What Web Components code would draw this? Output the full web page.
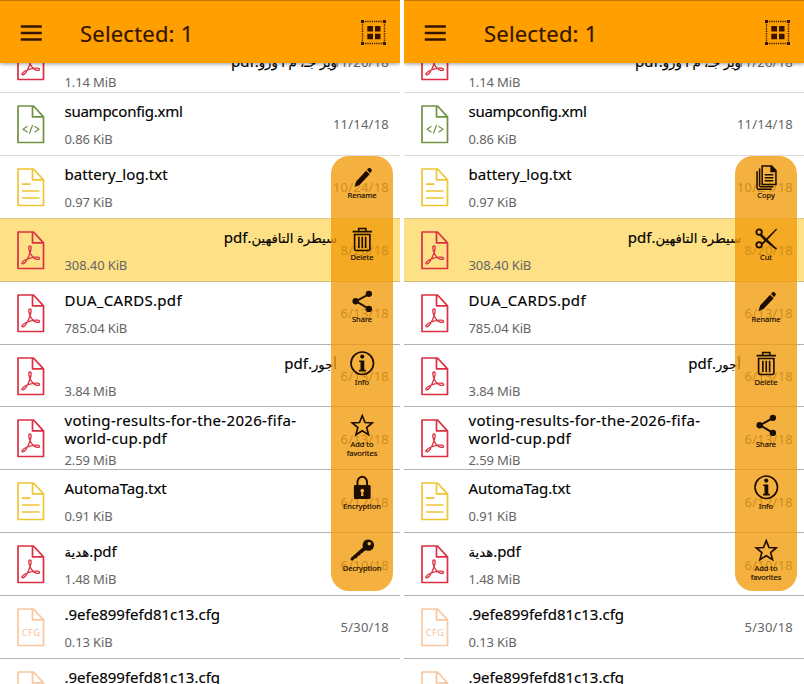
<!DOCTYPE html>
<html lang="en">
<head>
<meta charset="UTF-8">
<title>File manager</title>
<style>
    body {
        margin: 0;
        width: 804px;
        height: 684px;
        display: flex;
        gap: 4px;
        overflow: hidden;
        background: #fff;
        font-family: "Noto Sans", "DejaVu Sans", sans-serif;
    }
</style>
</head>
<body>
<phone-screen actions="rename,delete,share,info,favorite,encrypt,decrypt"></phone-screen>
<phone-screen actions="copy,cut,rename,delete,share,info,favorite"></phone-screen>

<script>
const PAGE = '<path d="M1 1H16.500L26.500 11.800V37.500H1ZM15.500 1V11.800H26.500"/>';

const FILE_ICONS = {
    pdf: { color: '#dc3042', art: '<path stroke-width="1.300" d="M13 15c-2.200 0-.9 4.600.2 7 1.500 3.200 3.900 5.700 6.700 6.300 3.400.7 3.500-1.800.8-2.100-4.100-.5-9 .9-12.200 2.600-3.500 1.900-4.500 4.200-2.600 4 2.300-.3 5.300-6 6.800-10 1.100-2.900 2.400-7.800.3-7.800Z"/>' },
    xml: { color: '#6f9340', art: '<path stroke-width="1.200" d="M10.500 21.300 6 24.200l4.500 3M17.500 21.300l4.500 2.900-4.500 3M15.600 20l-3.200 8.500"/>' },
    txt: { color: '#efc534', art: '<path stroke-width="1.700" d="M5 16.200H13.500M5 23H22.500M5 30H22.500"/>' },
    cfg: { color: '#f8c8a0', art: '<text x="13.800" y="28" font-size="9" text-anchor="middle" textLength="18" fill="#f6c099" stroke="none">CFG</text>' }
};

const ACTIONS = {
    rename: ['Rename', '<path d="M4.500 21.500 6 16.200 15.700 5.600 19.300 9 9.300 19.700ZM16.600 4.700l1.500-1.500q1-.8 2 .1l1 1q.8 1-.1 1.900l-1.400 1.800Z"/>'],
    delete: ['Delete', '<path d="M2.500 4.500H21.500M8.500 4.300V1.500H15.500V4.300M4.500 7.300V21.500Q4.500 23 6 23H18Q19.500 23 19.500 21.500V7.300ZM8.700 9.500V20.500M12 9.500V20.500M15.300 9.500V20.500" fill="none" stroke="#1d0d00" stroke-width="1.600"/>'],
    share: ['Share', '<path d="M18.500 5 6 12 18.500 19.500" fill="none" stroke="#1d0d00" stroke-width="1.900"/><circle cx="18.500" cy="4.700" r="3.100"/><circle cx="5.500" cy="12" r="3.100"/><circle cx="18.500" cy="19.500" r="3.100"/>'],
    info: ['Info', '<circle cx="12" cy="12" r="11" fill="none" stroke="#1d0d00" stroke-width="1.600"/><circle cx="12" cy="5.500" r="2"/><path d="M9 9.200H14V18.300H15.500V20H8.800V18.300H10.300V10.700H9Z"/>'],
    favorite: ['Add to favorites', '<path d="M12 2.600 14.700 9.300 21.800 9.700 16.300 14.200 18.200 21.200 12 17.400 5.800 21.200 7.700 14.200 2.200 9.700 9.300 9.300Z" fill="none" stroke="#1d0d00" stroke-width="1.600"/>'],
    encrypt: ['Encryption', '<path d="M7.300 11V7a4.700 5.300 0 0 1 9.400 0V11" fill="none" stroke="#1d0d00" stroke-width="1.900"/><path fill-rule="evenodd" d="M5.200 9.800H18.800Q20.200 9.800 20.200 11.200V22Q20.200 23.500 18.800 23.500H5.200Q3.800 23.500 3.800 22V11.200Q3.800 9.800 5.200 9.800ZM12 13.500a2 2 0 0 0-.9 3.700L10.700 20.500H13.300L12.900 17.200A2 2 0 0 0 12 13.500Z"/>'],
    decrypt: ['Decryption', '<path fill-rule="evenodd" d="M18 1.500a5.500 5.500 0 1 1-2.200 10.500L13.800 13 12 14.800 10.500 15.200 10 17 7.800 17.500 6.800 19.600 4.600 20 3 22 .5 21.800.8 19.500 12.700 9A5.500 5.500 0 0 1 18 1.500ZM18.800 3.800a1.700 1.700 0 1 0 .1 0Z"/>'],
    copy: ['Copy', '<path d="M8 1H17.300L21.500 5.500V19H8ZM5.500 3.500V20.300Q5.500 21.300 6.500 21.300H19M3 6V22.200Q3 23.700 4.500 23.700H17.500M10.500 9.500H19M10.500 12.500H19M10.500 15.500H19" fill="none" stroke="#1d0d00" stroke-width="1.500"/><path d="M16 1H17.500L21.500 5.500V7H16Z"/>'],
    cut: ['Cut', '<circle cx="5" cy="5" r="2.700" fill="none" stroke="#1d0d00" stroke-width="1.800"/><circle cx="5" cy="17.500" r="2.700" fill="none" stroke="#1d0d00" stroke-width="1.800"/><path d="M7 6.500 22.500 21.500 20.800 21.500 10.800 13.500 6 8.500ZM7 16.500 21.500 2 22.500 2.200 13 12.500 8 17.700Z" stroke="#1d0d00" stroke-width=".5"/>']
};

// name, size, date, type, letter spacing of the name, row mode
const FILES = [
    ['<bdi>وير جـ، م ا وزو</bdi>.pdf', '1.14 MiB', '11/26/18', 'pdf', 0, 'rtl two low faint'],
    ['suampconfig.xml', '0.86 KiB', '11/14/18', 'xml', -.25, 'faint'],
    ['battery_log.txt', '0.97 KiB', '10/24/18', 'txt', .05, 'above'],
    ['<bdi>سيطرة التافهين</bdi>.pdf', '308.40 KiB', '8/20/18', 'pdf', 0, 'rtl selected'],
    ['DUA_CARDS.pdf', '785.04 KiB', '6/13/18', 'pdf', .32, ''],
    ['<bdi>أجور</bdi>.pdf', '3.84 MiB', '6/13/18', 'pdf', 0, 'rtl'],
    ['voting-results-for-the-2026-fifa-<br>world-cup.pdf', '2.59 MiB', '6/13/18', 'pdf', .32, 'two'],
    ['AutomaTag.txt', '0.91 KiB', '6/12/18', 'txt', -.1, ''],
    ['<bdi>هدية</bdi>.pdf', '1.48 MiB', '6/10/18', 'pdf', 0, ''],
    ['.9efe899fefd81c13.cfg', '0.13 KiB', '5/30/18', 'cfg', 0, ''],
    ['.9efe899fefd81c13.cfg', '0.13 KiB', '5/30/18', 'cfg', 0, '']
];

class AppBar extends HTMLElement {
    constructor() {
        super();
        this.attachShadow({mode: 'open'});
    }

    connectedCallback() {
        this.shadowRoot.innerHTML = /*html*/ `
            <style>
                :host {
                    display: flex;
                    align-items: center;
                    box-sizing: border-box;
                    height: 63px;
                    flex: none;
                    padding: 1px 13px 0 20px;
                    border-top: 1px solid #c77708;
                    background: #ffa000;
                    color: #351500;
                    box-shadow: 0 1px 4px rgba(0, 0, 0, .4);
                    position: relative;
                    z-index: 1;
                }
                .title {
                    flex: 1;
                    margin-left: 38px;
                    font-size: 22px;
                    line-height: 30px;
                    letter-spacing: .2px;
                    -webkit-text-stroke: .2px;
                }
                svg { flex: none; }
            </style>
            <svg width="22" height="16" viewBox="0 0 22 16"><path d="M.8 1.500H21.800M.8 8H21.800M.8 14.500H21.800" stroke="#351500" stroke-width="2.500"/></svg>
            <div class="title"><slot></slot></div>
            <svg width="27" height="27" viewBox="0 0 27 27" fill="#351500">
                <path d="M3 2.500H24M3 24.500H24M2.500 3V24M24.500 3V24" stroke="#351500" stroke-width="1.400" stroke-dasharray="1.200 1"/>
                <path d="M1 1h3v3H1zM23 1h3v3h-3zM1 23h3v3H1zM23 23h3v3h-3zM7.300 7h5.700v5.500H7.300zM15 7h5.500v5.500H15zM7.300 14.700h5.700v5.500H7.300zM15 14.700h5.500v5.500H15z"/>
            </svg>
        `;
    }
}

class FileRow extends HTMLElement {
    constructor() {
        super();
        this.attachShadow({mode: 'open'});
    }

    connectedCallback() {
        const icon = FILE_ICONS[this.getAttribute('type')];
        this.shadowRoot.innerHTML = /*html*/ `
            <style>
                :host {
                    display: grid;
                    grid-template-columns: 28px 272.500px 1fr;
                    column-gap: 19.500px;
                    box-sizing: border-box;
                    height: 62.87px;
                    padding: 0 11px 0 17px;
                    border-bottom: 1px solid #b4b4b4;
                    background: #fff;
                }
                :host(.faint) { border-color: #dcdcdc; }
                :host(.above) { border-color: #d8c892; }
                :host(.selected) { background: #fee187; border-color: #cdbc80; }
                svg { margin-top: 12px; overflow: visible; }
                .name {
                    height: 37px;
                    padding-top: 8px;
                    box-sizing: border-box;
                    font-size: 15px;
                    line-height: 20px;
                    color: #000;
                    white-space: nowrap;
                    -webkit-text-stroke: .15px;
                }
                :host(.rtl) .name { direction: rtl; text-align: right; }
                :host(.rtl) .name { text-align: start; }
                :host(.two) .name { padding-top: 4px; line-height: 18px; height: 43px; }
                :host(.low) .name { padding-top: 22px; }
                .size { font-size: 13px; line-height: 18px; letter-spacing: -.12px; color: #656565; }
                :host(.two) .size { margin-top: .5px; }
                :host(.low) .size { margin-top: -.5px; }
                .date {
                    align-self: center;
                    text-align: right;
                    white-space: nowrap;
                    margin: 1px 0 0 -60px;
                    font-size: 13px;
                    line-height: 18px;
                    letter-spacing: .22px;
                    color: #656565;
                }
                ::slotted(span) { --arabic-size: 13.200px; }
            </style>
            <svg width="28" height="39" viewBox="0 0 28 39" fill="none" stroke="${icon.color}" stroke-width="1.700" stroke-linejoin="round">${PAGE}${icon.art}</svg>
            <div>
                <div class="name"><slot></slot></div>
                <div class="size">${this.getAttribute('size')}</div>
            </div>
            <div class="date">${this.getAttribute('date')}</div>
        `;
    }
}

class ActionItem extends HTMLElement {
    constructor() {
        super();
        this.attachShadow({mode: 'open'});
    }

    connectedCallback() {
        const [label, art] = ACTIONS[this.getAttribute('action')];
        this.shadowRoot.innerHTML = /*html*/ `
            <style>
                :host {
                    display: flex;
                    flex-direction: column;
                    align-items: center;
                    height: 62.2px;
                    padding-top: 8.500px;
                    box-sizing: border-box;
                    color: #140800;
                }
                svg { flex: none; overflow: visible; }
                span {
                    margin-top: 2px;
                    width: 44px;
                    text-align: center;
                    font-size: 7.5px;
                    line-height: 9.300px;
                    -webkit-text-stroke: .15px;
                }
            </style>
            <svg width="24.500" height="24.500" viewBox="0 0 24 24" fill="#1d0d00">${art}</svg>
            <span>${label}</span>
        `;
    }
}

class ActionMenu extends HTMLElement {
    constructor() {
        super();
        this.attachShadow({mode: 'open'});
    }

    connectedCallback() {
        this.shadowRoot.innerHTML = /*html*/ `
            <style>
                :host {
                    display: block;
                    position: absolute;
                    top: 156px;
                    right: 7px;
                    width: 62px;
                    height: 435px;
                    border-radius: 18px;
                    background: rgba(240, 152, 3, .76);
                }
            </style>
            <slot></slot>
        `;
    }
}

class PhoneScreen extends HTMLElement {
    constructor() {
        super();
        this.attachShadow({mode: 'open'});
    }

    connectedCallback() {
        const rows = FILES.map(([name, size, date, type, spacing, mode]) =>
            `<file-row class="${mode}" type="${type}" size="${size}" date="${date}"><span style="letter-spacing:${spacing}px">${name}</span></file-row>`).join('');
        const items = this.getAttribute('actions').split(',').map(a => `<action-item action="${a}"></action-item>`).join('');
        this.shadowRoot.innerHTML = /*html*/ `
            <style>
                :host {
                    display: flex;
                    flex-direction: column;
                    position: relative;
                    width: 400px;
                    height: 684px;
                    overflow: hidden;
                }
                .list { margin-top: -32.800px; }
                bdi { font-size: var(--arabic-size); }
            </style>
            <app-bar>Selected: 1</app-bar>
            <div class="list">${rows}</div>
            <action-menu>${items}</action-menu>
        `;
    }
}

customElements.define('app-bar', AppBar);
customElements.define('file-row', FileRow);
customElements.define('action-item', ActionItem);
customElements.define('action-menu', ActionMenu);
customElements.define('phone-screen', PhoneScreen);
</script>
</body>
</html>
